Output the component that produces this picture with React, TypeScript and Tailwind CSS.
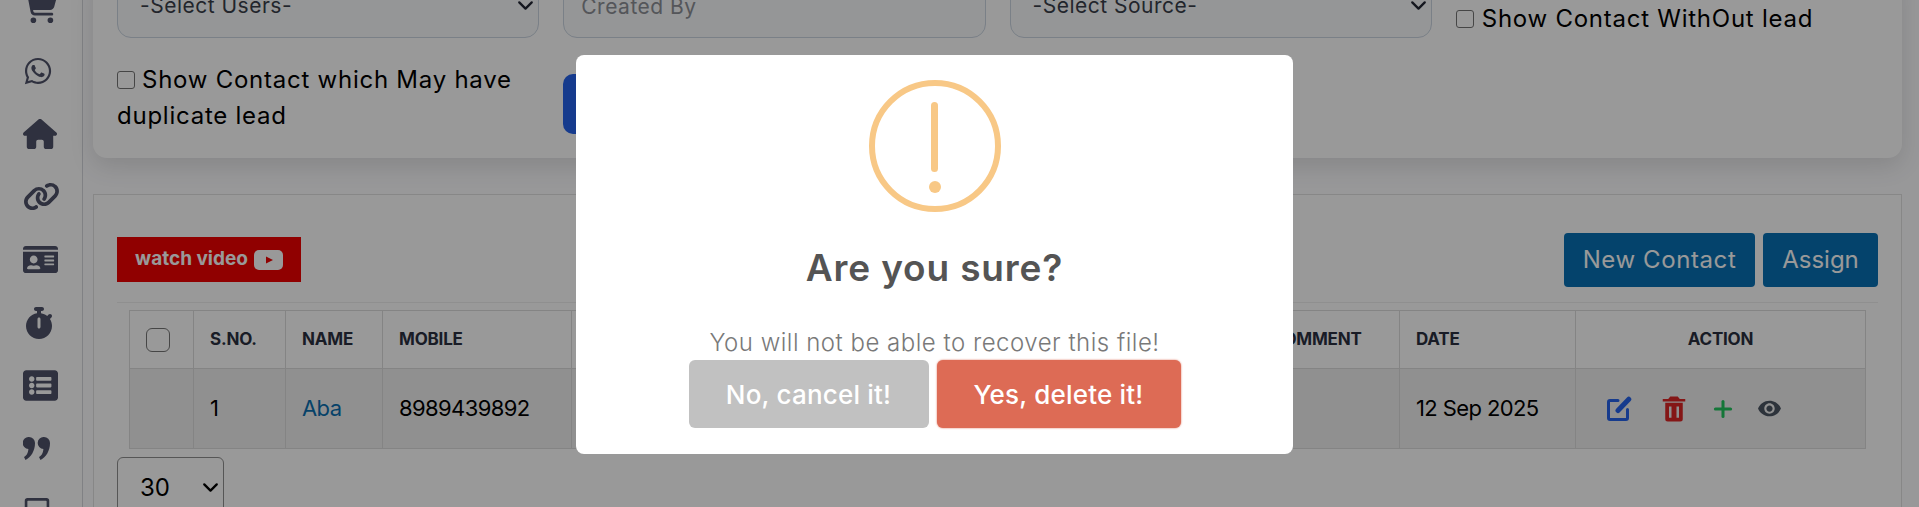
import { ChevronDown, Plus } from 'lucide-react';
import { BiSolidTrash } from 'react-icons/bi';
import { FaIdCard, FaListAlt, FaTabletAlt, FaWhatsapp } from 'react-icons/fa';
import { FaCartShopping, FaHouse, FaLink, FaStopwatch } from 'react-icons/fa6';
import { MdRemoveRedEye } from 'react-icons/md';

const font = { fontFamily: 'Inter, "Noto Sans", sans-serif' };

function QuoteIcon() {
  return (
    <svg width="27" height="23" viewBox="0 0 27 23" fill="currentColor">
      <path d="M6 0a6 6 0 0 1 6 6c0 8-4 14-9.500 17L1 20c2.500-1.500 4-3.500 4.400-8A6 6 0 0 1 6 0z" />
      <path d="M21 0a6 6 0 0 1 6 6c0 8-4 14-9.500 17L16 20c2.500-1.500 4-3.500 4.400-8A6 6 0 0 1 21 0z" />
    </svg>
  );
}

function EditIcon() {
  return (
    <svg width="25" height="25" viewBox="0 0 25 25" fill="none" stroke="#2563eb" strokeLinecap="round" strokeLinejoin="round">
      <path d="M11 4.500H3a1.500 1.500 0 0 0-1.500 1.500v16A1.500 1.500 0 0 0 3 23.500h16a1.500 1.500 0 0 0 1.500-1.500v-8.500" strokeWidth="3" />
      <path d="M11 14.500 21.800 3.200" strokeWidth="5" />
    </svg>
  );
}

function YoutubeBadge() {
  return (
    <svg width="29" height="20" viewBox="0 0 29 20">
      <rect width="29" height="20" rx="5" fill="#ffffff" />
      <polygon points="12,6.500 19,10 12,13.500" fill="#f00000" />
    </svg>
  );
}

function FilterSelect({ label }: { label: string }) {
  return (
    <div className="relative">
      <select className="h-[64px] w-full appearance-none rounded-[14px] border border-[#cbd5e1] bg-[#f8fafc] pl-[22px] text-[21px] tracking-[0.5px] text-[#3a3f4a]">
        <option>{label}</option>
      </select>
      <ChevronDown size={25} strokeWidth={2.2} className="pointer-events-none absolute right-[1px] top-[19px] text-[#222633]" />
    </div>
  );
}

const sideIcons = [
  <FaCartShopping size={34} />,
  <FaWhatsapp size={30} />,
  <FaHouse size={34} />,
  <FaLink size={37} />,
  <FaIdCard size={35} />,
  <FaStopwatch size={32} />,
  <FaListAlt size={35} />,
  <QuoteIcon />,
  <FaTabletAlt size={28} />,
];

export default function App() {
  return (
    <div className="relative flex h-screen overflow-hidden bg-[#fdfdff] text-black" style={font}>
      {/* Sidebar */}
      <aside className="w-[83px] shrink-0 border-r border-[#d5d7dd] bg-white -mt-[24px] pl-[23px] text-[#4f5269]">
        {sideIcons.map((icon, i) => (
          <div key={i} className="flex h-[63px] items-center">
            {icon}
          </div>
        ))}
      </aside>

      <main className="flex-1 min-w-0 pl-[10px] pr-[17px] -mt-[26px]">
        {/* Filters */}
        <section className="rounded-b-[14px] bg-white px-[24px] pb-[24px] shadow-[0_8px_24px_rgba(0,0,0,0.12)]">
          <div className="grid grid-cols-4 gap-x-[24px] gap-y-[24px] text-[24px] leading-[36px] tracking-[0.75px]">
            <FilterSelect label="-Select Users-" />
            <input
              placeholder="Created By"
              className="h-[64px] w-full rounded-[14px] border border-[#cbd5e1] bg-[#f8fafc] px-[17px] text-[21px] tracking-[0.5px] placeholder:text-[#8d8f96]"
            />
            <FilterSelect label="-Select Source-" />
            <label className="flex h-[63px] items-center gap-[8px] pt-[27px]">
              <input type="checkbox" className="h-[18px] w-[18px] appearance-none rounded-[3px] border border-[#767676] bg-white" />
              Show Contact WithOut lead
            </label>

            <label className="block">
              <input type="checkbox" className="mr-[7px] h-[18px] w-[18px] appearance-none rounded-[3px] border border-[#767676] bg-white align-[-1px]" />
              Show Contact which May have duplicate lead
            </label>
            <div className="pt-[12px]">
              <button className="block h-[60px] w-[160px] rounded-[10px] bg-[#2563eb]" />
            </div>
          </div>
        </section>

        {/* Contacts */}
        <section className="mt-[36px] border border-[#e2e2e2] bg-white px-[23px] pt-[38px]">
          <div className="flex items-start justify-between">
            <div className="mt-[4px] flex h-[45px] w-[184px] items-center justify-center gap-[6px] bg-[#f00000] text-[19px] font-bold text-white">
              watch video
              <YoutubeBadge />
            </div>
            <div className="flex gap-[8px] text-[24px] text-white">
              <button className="h-[54px] w-[191px] rounded-[4px] bg-[#0771b5] tracking-[0.6px]">New Contact</button>
              <button className="h-[54px] w-[115px] rounded-[4px] bg-[#0771b5]">Assign</button>
            </div>
          </div>

          <hr className="mt-[15px] border-[#eeeeee]" />

          <div className="mt-[7px] px-[12px]">
            <table className="w-[1736px] table-fixed border-collapse text-left">
              <colgroup>
                <col className="w-[64px]" />
                <col className="w-[92px]" />
                <col className="w-[97px]" />
                <col className="w-[189px]" />
                <col className="w-[683px]" />
                <col className="w-[145px]" />
                <col className="w-[176px]" />
                <col className="w-[290px]" />
              </colgroup>
              <thead>
                <tr className="h-[58px] border-b border-b-[#b5b5b5] text-[17px] font-semibold tracking-[-0.2px] text-[#2b3040]">
                  <th className="border border-[#dddddd] pr-[8px] text-center">
                    <input type="checkbox" className="h-[24px] w-[24px] appearance-none rounded-[6px] border border-[#767676] bg-transparent align-middle" />
                  </th>
                  <th className="border border-[#dddddd] pl-[16px]">S.NO.</th>
                  <th className="border border-[#dddddd] pl-[16px]">NAME</th>
                  <th className="border border-[#dddddd] pl-[16px]">MOBILE</th>
                  <th className="border border-[#dddddd]"></th>
                  <th className="border border-[#dddddd] pl-[16px]">COMMENT</th>
                  <th className="border border-[#dddddd] pl-[16px]">DATE</th>
                  <th className="border border-[#dddddd] text-center">ACTION</th>
                </tr>
              </thead>
              <tbody>
                <tr className="h-[80px] bg-[#f0f0f0] text-[22px] tracking-[-0.6px]">
                  <td className="border border-[#dddddd]"></td>
                  <td className="border border-[#dddddd] pl-[16px]">1</td>
                  <td className="border border-[#dddddd] pl-[16px] text-[#0a6fb0]">Aba</td>
                  <td className="border border-[#dddddd] pl-[16px]">8989439892</td>
                  <td className="border border-[#dddddd]"></td>
                  <td className="border border-[#dddddd]"></td>
                  <td className="border border-[#dddddd] pl-[16px]">12 Sep 2025</td>
                  <td className="border border-[#dddddd] pl-[31px]">
                    <div className="flex items-center">
                      <EditIcon />
                      <span className="ml-[27px] text-[#dc2626]">
                        <BiSolidTrash size={30} />
                      </span>
                      <Plus size={26} strokeWidth={2.8} className="ml-[21px] text-[#22c55e]" />
                      <MdRemoveRedEye size={25} className="ml-[21px] text-[#4b5563]" />
                    </div>
                  </td>
                </tr>
              </tbody>
            </table>
          </div>

          <div className="relative mt-[8px] w-[107px]">
            <select className="h-[62px] w-full appearance-none rounded-[6px] border border-[#8f8f8f] bg-white pl-[22px] text-[24px]">
              <option>30</option>
            </select>
            <ChevronDown size={25} strokeWidth={2.2} className="pointer-events-none absolute right-[1px] top-[18px] text-black" />
          </div>
        </section>
      </main>

      {/* Confirm dialog */}
      <div className="fixed inset-0 flex items-center justify-center bg-black/40 pr-[50px] pt-[2px]">
        <div className="flex h-[399px] w-[717px] flex-col items-center rounded-[8px] bg-white pt-[25px]">
          <div className="flex h-[132px] w-[132px] flex-col items-center rounded-full border-[6px] border-[#f8c886] pt-[16px]">
            <div className="h-[70px] w-[7px] rounded-full bg-[#f8c886]" />
            <div className="mt-[9px] h-[12px] w-[12px] rounded-full bg-[#f8c886]" />
          </div>
          <h2 className="mt-[32px] text-[37px] font-semibold leading-[48px] tracking-[0.85px] text-[#545454]">Are you sure?</h2>
          <p className="mt-[34px] text-[24px] font-light leading-[34px] tracking-[0.5px] text-[#797979]">
            You will not be able to recover this file!
          </p>
          <div className="flex gap-[8px] text-[26px] font-medium tracking-[0.2px] text-white">
            <button className="h-[68px] w-[240px] rounded-[6px] bg-[#c1c1c1]">No, cancel it!</button>
            <button className="h-[68px] w-[244px] rounded-[6px] bg-[#dd6b55] shadow-[0_0_2px_#dd6b55]">
              Yes, delete it!
            </button>
          </div>
        </div>
      </div>
    </div>
  );
}
